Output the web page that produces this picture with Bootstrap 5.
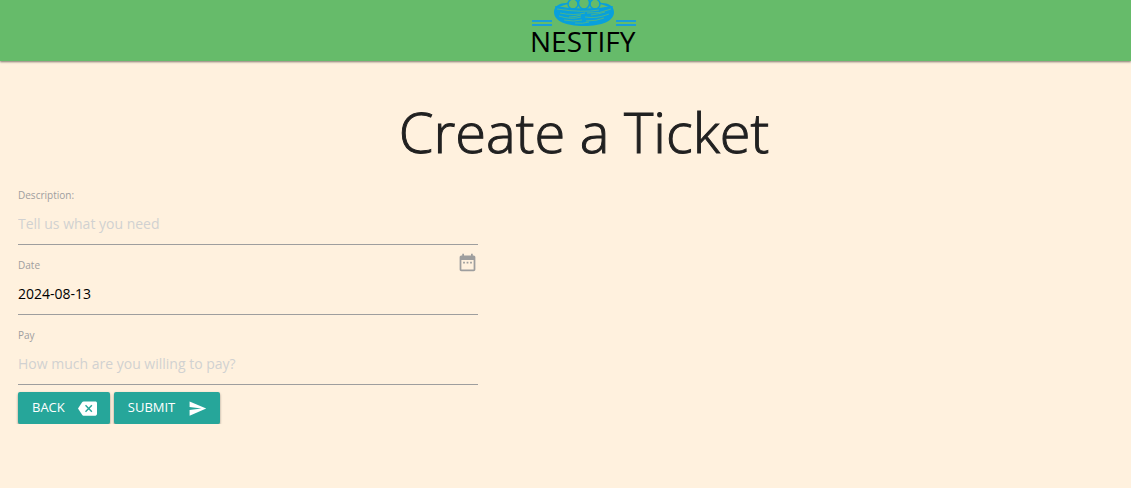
<!DOCTYPE html>
<html lang="en">
<head>
<meta charset="utf-8">
<meta name="viewport" content="width=device-width, initial-scale=1">
<title>Nestify – Create a Ticket</title>
<link rel="stylesheet" href="https://cdn.jsdelivr.net/npm/bootstrap@5.3.0/dist/css/bootstrap.min.css">
<style>
body{background:#fff1de;color:#212121;font-family:"Open Sans","Noto Sans",sans-serif}
.site-bar{background:#66bb6a;height:61px;padding-left:37px;box-shadow:0 1px 2px rgba(0,0,0,.5)}
.brand-logo{line-height:0}
.page-title{font-size:56px;font-weight:300;-webkit-text-stroke:1px currentColor;line-height:64px;padding:38px 0 12px 37px}
.ticket-form{max-width:496px;padding:0 18px}
.label-line{height:16px}
.field-label{font-size:10px;line-height:16px;color:#9e9e9e}
.line-input{display:block;width:100%;height:42px;border:0;border-bottom:1px solid #9e9e9e;border-radius:0;background:transparent;padding:0;font-size:14px;color:#000;outline:0}
.line-input::placeholder{color:#d1d1d1;opacity:1}
.field-row{height:70px;padding-top:12px}
.action-row{padding-top:7px}
.action-btn{gap:13px;height:32px;padding:0 13px 0 14px;border:0;border-radius:2px;background:#26a69a;color:#fff;font-size:13px;box-shadow:0 2px 2px rgba(0,0,0,.25),0 1px 3px rgba(0,0,0,.2)}
.action-btn:hover{background:#2bbbad;color:#fff}
</style>
</head>
<body>
<nav class="site-bar d-flex justify-content-center align-items-start">
<a class="brand-logo" href="#" aria-label="Nestify">
<svg width="110" height="60" viewBox="-2 0 110 60">
<path fill="none" stroke="#1a9fd9" stroke-width="2" d="M1 21h20M1 25h20M85 21h20M85 25h20"/>
<path fill="#08a0dc" d="M23 12C23 6 29 3 35 3q18-6 36 0c6 0 12 3 12 9 0 9-12 14-30 14S23 21 23 12Z"/>
<path fill="#66bb6a" d="M28 7Q53-3 78 7 66 10 53 10 40 10 28 7Z"/>
<g fill="#66bb6a" stroke="#08a0dc" stroke-width="1.500"><ellipse cx="42" cy="4" rx="5" ry="5"/><ellipse cx="64" cy="4" rx="5" ry="5"/><ellipse cx="53" cy="3" rx="5.500" ry="6"/></g>
<path fill="#08a0dc" d="M24 6q29 5 58 0l-2 6q-27 6-54 0Z"/>
<g fill="none" stroke="#66bb6a" stroke-width=".7"><path d="M26 9q26 4 42 1M29 13q14 3 25 0M56 13q13 1 24-4M28 16q12 4 22 1M54 17q12 2 24-3M33 20q10 2 18 0M55 21q11 0 18-3M44 23q8 1 14-1M60 15q8-1 14-3M38 17q6 0 12-2"/></g>
<text x="-1" y="52" font-family="Open Sans, sans-serif" font-size="28">NESTIFY</text>
</svg>
</a>
</nav>
<main>
<h1 class="page-title text-center m-0">Create a Ticket</h1>
<form class="ticket-form">
<div class="field-row"><div class="label-line d-flex"><label class="field-label" for="description">Description:</label></div><input class="line-input" id="description" type="text" placeholder="Tell us what you need"></div>
<div class="field-row"><div class="label-line d-flex justify-content-between align-items-end"><label class="field-label" for="date">Date</label>
<svg width="21" height="21" viewBox="0 0 24 24" fill="#9e9e9e" aria-hidden="true"><path d="M9 11H7v2h2zm4 0h-2v2h2zm4 0h-2v2h2zm2-7h-1V2h-2v2H8V2H6v2H5c-1.100 0-2 .9-2 2v14c0 1.100.9 2 2 2h14c1.100 0 2-.9 2-2V6c0-1.100-.9-2-2-2m0 16H5V9h14z"/></svg></div><input class="line-input" id="date" type="text" value="2024-08-13"></div>
<div class="field-row"><div class="label-line d-flex"><label class="field-label" for="pay">Pay</label></div><input class="line-input" id="pay" type="text" placeholder="How much are you willing to pay?"></div>
<div class="action-row d-flex gap-1">
<button type="button" class="btn action-btn d-inline-flex align-items-center">BACK<svg width="19" height="19" viewBox="0 0 24 24" fill="currentColor" aria-hidden="true"><path d="M22 3H7c-.69 0-1.230.35-1.590.88L0 12l5.410 8.110c.36.53.9.89 1.590.89h15c1.100 0 2-.9 2-2V5c0-1.100-.9-2-2-2"/><path d="M9.500 8l8 8m0-8l-8 8" stroke="#26a69a" stroke-width="1.800"/></svg></button>
<button type="submit" class="btn action-btn d-inline-flex align-items-center">SUBMIT<svg width="19" height="19" viewBox="0 0 24 24" fill="currentColor" aria-hidden="true"><path d="M2 21l21-9L2 3v7l15 2-15 2z"/></svg></button>
</div>
</form>
</main>
<script src="https://cdn.jsdelivr.net/npm/bootstrap@5.3.0/dist/js/bootstrap.bundle.min.js"></script>
</body>
</html>
